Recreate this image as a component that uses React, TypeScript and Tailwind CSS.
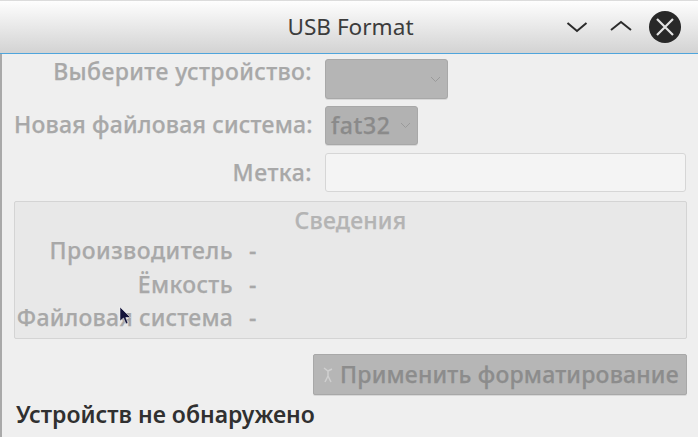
export default function App() {
  return (
    <div className="relative flex h-[437px] w-[698px] flex-col overflow-hidden bg-[#efefef] font-['Noto_Sans',sans-serif]">
      <header className="relative flex h-[54px] shrink-0 items-center justify-center border-t border-b border-t-[#dcdcdc] border-b-[#4fa5dc] bg-gradient-to-b from-[#fefefe] to-[#d3d3d3]">
        <span className="pl-[3px] text-[22.6px] leading-none text-[#3c3c3c]">USB Format</span>
        <div className="absolute right-[17px] top-[10px] flex items-center">
          <svg width="24" height="24" viewBox="0 0 24 24" className="mr-[20px]" fill="none" stroke="#2b2b2b" strokeWidth="2">
            <path d="M2.500 8 L12 16 L21.500 8" />
          </svg>
          <svg width="24" height="24" viewBox="0 0 24 24" className="mr-[16px]" fill="none" stroke="#2b2b2b" strokeWidth="2">
            <path d="M2 15 L12 7 L22 15" />
          </svg>
          <svg width="32" height="32" viewBox="0 0 32 32">
            <circle cx="16" cy="16" r="16" fill="#282828" />
            <path d="M8 8 L24 24 M24 8 L8 24" stroke="#e4e4e4" strokeWidth="2.200" />
          </svg>
        </div>
      </header>

      <main className="flex flex-1 flex-col border-l-2 border-l-[#a9a9a9] pl-[12px] pr-[11px]">
        <div className="grid grid-cols-[298px_1fr] items-center gap-x-[13px] text-[23px] font-medium tracking-[0.2px] text-[#a8a8a8] [-webkit-text-stroke:0.25px_#a8a8a8]">
          <span className="mb-[11px] mt-[0px] whitespace-nowrap text-right leading-none tracking-[0.4px]">Выберите устройство:</span>
          <div className="mt-[5px] flex h-[40px] w-[123px] items-center justify-end rounded-[3px] border border-[#a8a8a8] bg-[#b5b5b5] pr-[6px] shadow-[0_1px_0_#d8d8d8]">
            <Chev />
          </div>
          <span className="mt-[5px] whitespace-nowrap text-right leading-none">Новая файловая система:</span>
          <div className="mt-[7px] flex h-[39px] w-[93px] items-center justify-between rounded-[3px] border border-[#a8a8a8] bg-[#b2b2b2] pl-[5px] pr-[6px] text-[#8a8a8a] shadow-[0_1px_0_#d8d8d8] [-webkit-text-stroke:0.25px_#8a8a8a]">
            <span className="leading-none tracking-[0.6px]">fat32</span>
            <Chev />
          </div>
          <span className="mt-[7px] whitespace-nowrap text-right leading-none tracking-[0.5px]">Метка:</span>
          <div className="mt-[8px] h-[39px] w-[361px] rounded-[3px] border border-[#d6d6d6] bg-[#f4f4f4]" />
        </div>

        <section className="mt-[9px] h-[138px] w-[673px] rounded-[2px] border border-[#d4d4d4] bg-[#e8e8e8] text-[23px] font-medium tracking-[0.2px] text-[#a8a8a8] [-webkit-text-stroke:0.25px_#a8a8a8]">
          <div className="mt-[4px] text-center leading-[28px] text-[#b4b4b4] [-webkit-text-stroke:0.25px_#b4b4b4]">Сведения</div>
          <dl className="mt-[2px] grid grid-cols-[218px_1fr] gap-x-[16px] gap-y-[5.500px]">
            <dt className="whitespace-nowrap text-right leading-[28px] tracking-[0.5px]">Производитель</dt>
            <dd className="leading-[28px]">-</dd>
            <dt className="whitespace-nowrap text-right leading-[28px] tracking-[0.4px]">Ёмкость</dt>
            <dd className="leading-[28px]">-</dd>
            <dt className="whitespace-nowrap text-right leading-[28px]">Файловая система</dt>
            <dd className="leading-[28px]">-</dd>
          </dl>
        </section>

        <div className="mt-[15px] flex justify-end">
          <button className="flex h-[41px] w-[374px] items-center gap-[5px] rounded-[2px] border border-[#a8a8a8] bg-[#b6b6b6] pl-[7px] text-[23px] font-medium tracking-[0.2px] text-[#8c8c8c] shadow-[0_1px_0_#d8d8d8] [-webkit-text-stroke:0.25px_#8c8c8c]">
            <svg width="14" height="18" viewBox="0 0 14 18" fill="none" stroke="#cfcfcf" strokeWidth="1.500">
              <path d="M3 2 L7 5 L11 3 M7 5 L7 10 M7 10 L4 16 M7 10 L10 16" />
            </svg>
            <span className="whitespace-nowrap leading-none">Применить форматирование</span>
          </button>
        </div>

        <p className="mt-[5px] whitespace-nowrap pl-[2px] text-[23px] font-semibold leading-[28px] text-[#303030]">Устройств не обнаружено</p>
      </main>

      <svg className="absolute left-[119px] top-[306px]" width="13" height="20" viewBox="0 0 13 20">
        <path d="M1 1 L1 15 L4.500 12 L7 18 L9 17 L6.800 11.500 L11.500 11.500 Z" fill="#14143a" stroke="#ffffff" strokeWidth="0.500" />
      </svg>
    </div>
  );
}

function Chev() {
  return (
    <svg width="11" height="7" viewBox="0 0 11 7" fill="none" stroke="#9a9a9a" strokeWidth="1">
      <path d="M1 1 L5.500 5.500 L10 1" />
    </svg>
  );
}
